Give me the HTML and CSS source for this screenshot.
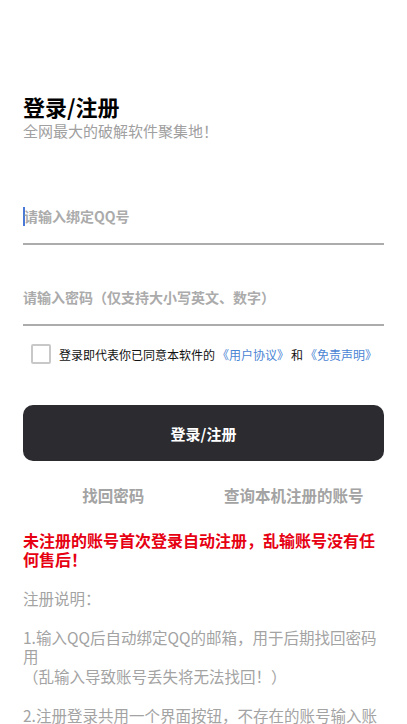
FILE: index.html
```html
<!DOCTYPE html>
<html>
  <head>
    <title>登录/注册</title>
    <link rel="stylesheet" href="styles.css">
  </head>
  <body>
    <div id="login">
      <div class="head">
        <h1 class="title">登录/注册</h1>
        <p class="subtitle">全网最大的破解软件聚集地！</p>
      </div>

      <div class="field first">
        <span class="caret"></span>
        <span class="placeholder">请输入绑定QQ号</span>
      </div>
      <div class="field">
        <span class="placeholder">请输入密码（仅支持大小写英文、数字）</span>
      </div>

      <div class="agree">
        <span class="check"></span>
        <span class="agree_text">登录即代表你已同意本软件的<a href="#">《用户协议》</a>和<a href="#">《免责声明》</a></span>
      </div>

      <a href="#" class="submit">登录/注册</a>

      <div class="links">
        <a href="#">找回密码</a>
        <a href="#">查询本机注册的账号</a>
      </div>

      <div class="notes">
        <p class="warn">未注册的账号首次登录自动注册，乱输账号没有任何售后！</p>
        <p>注册说明：</p>
        <p>1.输入QQ后自动绑定QQ的邮箱，用于后期找回密码用<br>（乱输入导致账号丢失将无法找回！）</p>
        <p>2.注册登录共用一个界面按钮，不存在的账号输入账号密码自动生成注册</p>
      </div>
    </div>
  </body>
</html>
```

FILE: styles.css
```css
html, body {
  margin: 0;
  padding: 0;
  background: #fff;
  height: 100%;
  overflow: hidden;
}

body {
  font-family: "Noto Sans CJK SC", "Noto Sans", sans-serif;
  color: #222;
}

#login {
  padding: 91px 23px 0 23px;
}

.head .title {
  margin: 0;
  font-size: 22px;
  line-height: 30px;
  font-weight: bold;
  color: #000;
}

.head .subtitle {
  margin: 0;
  font-size: 15px;
  line-height: 20px;
  color: #a0a0a0;
}

.field {
  height: 51px;
  box-sizing: border-box;
  padding-bottom: 5px;
  border-bottom: 2px solid #acacac;
  display: flex;
  align-items: center;
  margin-top: 30px;
}

.field.first {
  margin-top: 53px;
}

.caret {
  width: 2px;
  height: 19px;
  background: #4a78d6;
  margin-right: -1px;
}

.placeholder {
  font-size: 14px;
  font-weight: bold;
  color: #ababab;
}

.agree {
  display: flex;
  align-items: center;
  margin-top: 18px;
  padding-left: 8px;
  height: 20px;
}

.check {
  width: 20px;
  height: 20px;
  box-sizing: border-box;
  border: 2px solid #c8c8c8;
  border-radius: 2px;
  margin-right: 8px;
}

.agree_text {
  font-size: 12px;
  color: #111;
  white-space: nowrap;
}

.agree_text a {
  color: #4a84d4;
  text-decoration: none;
  margin: 0 2px;
}

.submit {
  display: flex;
  align-items: center;
  justify-content: center;
  margin-top: 41px;
  height: 56px;
  background: #2b2b30;
  border-radius: 10px;
  color: #fff;
  font-size: 15px;
  font-weight: bold;
  text-decoration: none;
}

.links {
  display: flex;
  margin-top: 22px;
}

.links a {
  flex: 1;
  text-align: center;
  font-size: 15.5px;
  line-height: 24px;
  font-weight: bold;
  color: #a3a3a3;
  text-decoration: none;
}

.notes {
  margin-top: 24px;
  font-size: 15.5px;
  line-height: 19.4px;
  color: #a3a3a3;
}

.notes p {
  margin: 0 0 19.4px 0;
}

.notes .warn {
  font-size: 16px;
  font-weight: bold;
  color: #e60012;
}
```
